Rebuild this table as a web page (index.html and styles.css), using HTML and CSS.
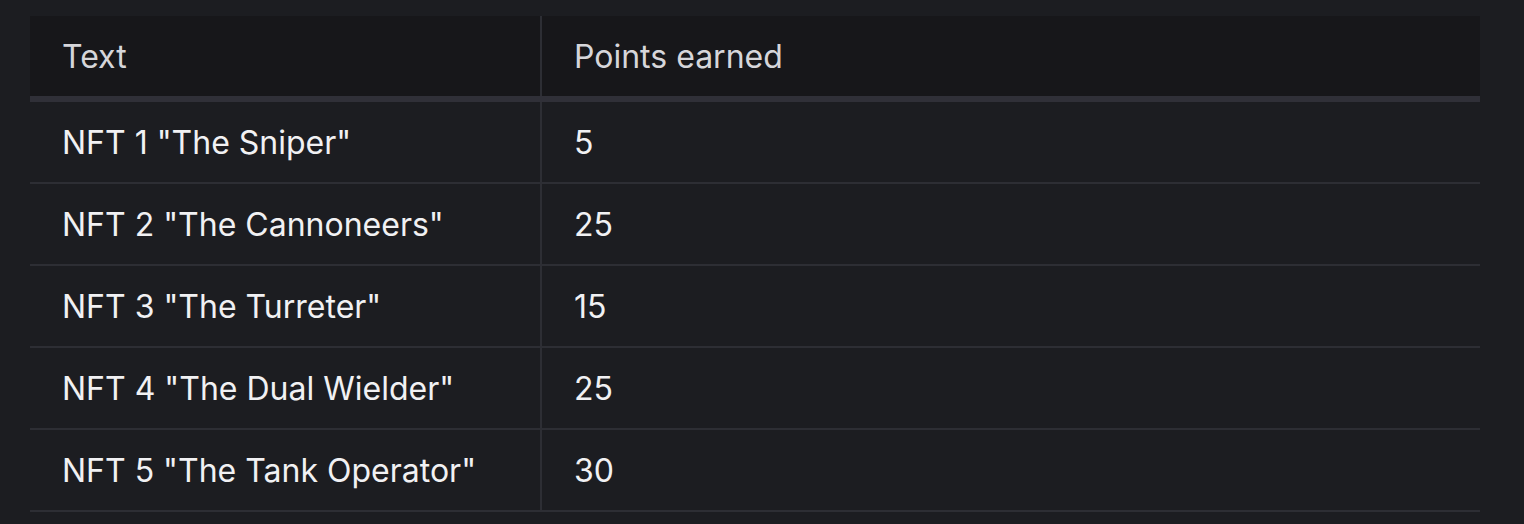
FILE: index.html
```html
<!DOCTYPE html>
<html lang="en">
<head>
  <meta charset="UTF-8">
  <meta name="viewport" content="width=device-width, initial-scale=1.0">
  <title>NFT Points</title>
  <link rel="stylesheet" href="styles.css">
</head>
<body>

  <!-- Points table -->
  <main class="content">
    <table class="points-table">
      <thead>
        <tr>
          <th>Text</th>
          <th>Points earned</th>
        </tr>
      </thead>
      <tbody>
        <tr>
          <td>NFT 1 "The Sniper"</td>
          <td>5</td>
        </tr>
        <tr>
          <td>NFT 2 "The Cannoneers"</td>
          <td>25</td>
        </tr>
        <tr>
          <td>NFT 3 "The Turreter"</td>
          <td>15</td>
        </tr>
        <tr>
          <td>NFT 4 "The Dual Wielder"</td>
          <td>25</td>
        </tr>
        <tr>
          <td>NFT 5 "The Tank Operator"</td>
          <td>30</td>
        </tr>
      </tbody>
    </table>
  </main>
</body>
</html>
```

FILE: styles.css
```css
/* Colours */
:root {
  --bg-color: #1c1d21;
  --head-bg: #17171a;
  --head-text: #d6d6da;
  --cell-text: #f1f1f3;
  --line-color: #2d2e34;
  --head-line: #303038;
}

* {
  margin: 0;
  padding: 0;
  box-sizing: border-box;
}

body {
  font-family: Inter, 'Noto Sans', sans-serif;
  background-color: var(--bg-color);
  color: var(--cell-text);
}

.content {
  padding: 16px 44px 0 30px;
}

/* Table */
.points-table {
  width: 100%;
  border-collapse: collapse;
  font-size: 32px;
  line-height: 36px;
}

.points-table th,
.points-table td {
  text-align: left;
  padding: 23px 32px 21px 32px;
  border-bottom: 2px solid var(--line-color);
}

.points-table th:first-child,
.points-table td:first-child {
  width: 511px;
  border-right: 2px solid var(--line-color);
}

.points-table th {
  background-color: var(--head-bg);
  color: var(--head-text);
  font-weight: 400;
  border-bottom: 6px solid var(--head-line);
}
```
